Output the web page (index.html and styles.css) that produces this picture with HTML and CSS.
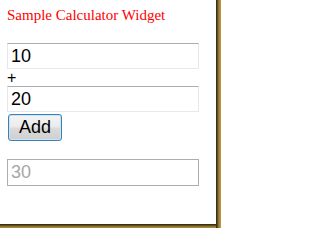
FILE: index.html
```html
<!DOCTYPE html>
<html>
<head>
<meta charset="utf-8">
<link rel="stylesheet" href="styles.css">
</head>
<body>
<div class="page">
  <div class="panel">
    <div class="title">Sample Calculator Widget</div>
    <input class="field first" type="text" value="10">
    <div class="plus">+</div>
    <input class="field" type="text" value="20">
    <button class="add" type="button">Add</button>
    <input class="field result" type="text" value="30" disabled>
  </div>
</div>
</body>
</html>
```
FILE: styles.css
```css
html, body {
  margin: 0;
  padding: 0;
  background: #fff;
}
.page {
  width: 221px;
  height: 228px;
  background:
    linear-gradient(to right, #2a2210 0px, #4a3c18 1px, #7a6428 2px, #9c8034 3px, #b09240 4px, #b89a48 5px) right top / 5px 100% no-repeat,
    linear-gradient(to bottom, #2a2210 0px, #4a3c18 1px, #7a6428 2px, #9c8034 3px, #b09240 4px) left bottom / 100% 4px no-repeat,
    #fff;
}
.panel {
  width: 216px;
  height: 224px;
  box-sizing: border-box;
  background: #fff;
  padding: 7px 0 0 7px;
  display: flex;
  flex-direction: column;
  align-items: flex-start;
}
.title {
  font-family: "Liberation Serif", "Times New Roman", serif;
  font-size: 15px;
  line-height: 17px;
  color: #ff0000;
}
.field {
  box-sizing: border-box;
  width: 192px;
  height: 26px;
  margin: 0;
  padding: 0 3px;
  font-family: "Liberation Sans", Arial, sans-serif;
  font-size: 18px;
  color: #000;
  background: #fff;
  border: 1px solid #e3e9ef;
  border-top-color: #abadb3;
  border-radius: 0;
  outline: none;
}
.first {
  margin-top: 19px;
}
.plus {
  height: 17px;
  font-family: "Liberation Sans", Arial, sans-serif;
  font-size: 16px;
  line-height: 17px;
  color: #000;
  padding-top: 0;
  box-sizing: border-box;
}
.add {
  box-sizing: border-box;
  margin: 2px 0 0 1px;
  width: 54px;
  height: 27px;
  padding: 0;
  font-family: "Liberation Sans", Arial, sans-serif;
  font-size: 18px;
  color: #000;
  border: 1px solid #3c7fb1;
  border-radius: 3px;
  background: linear-gradient(to bottom, #f4f4f4 0%, #ececec 45%, #dadada 55%, #cfcfcf 100%);
  box-shadow: inset 0 0 0 1px #c8e6f8;
}
.result {
  margin-top: 18px;
  height: 27px;
  color: #a6a6a6;
  border: 1px solid #adadad;
  background: #fff;
}
```
